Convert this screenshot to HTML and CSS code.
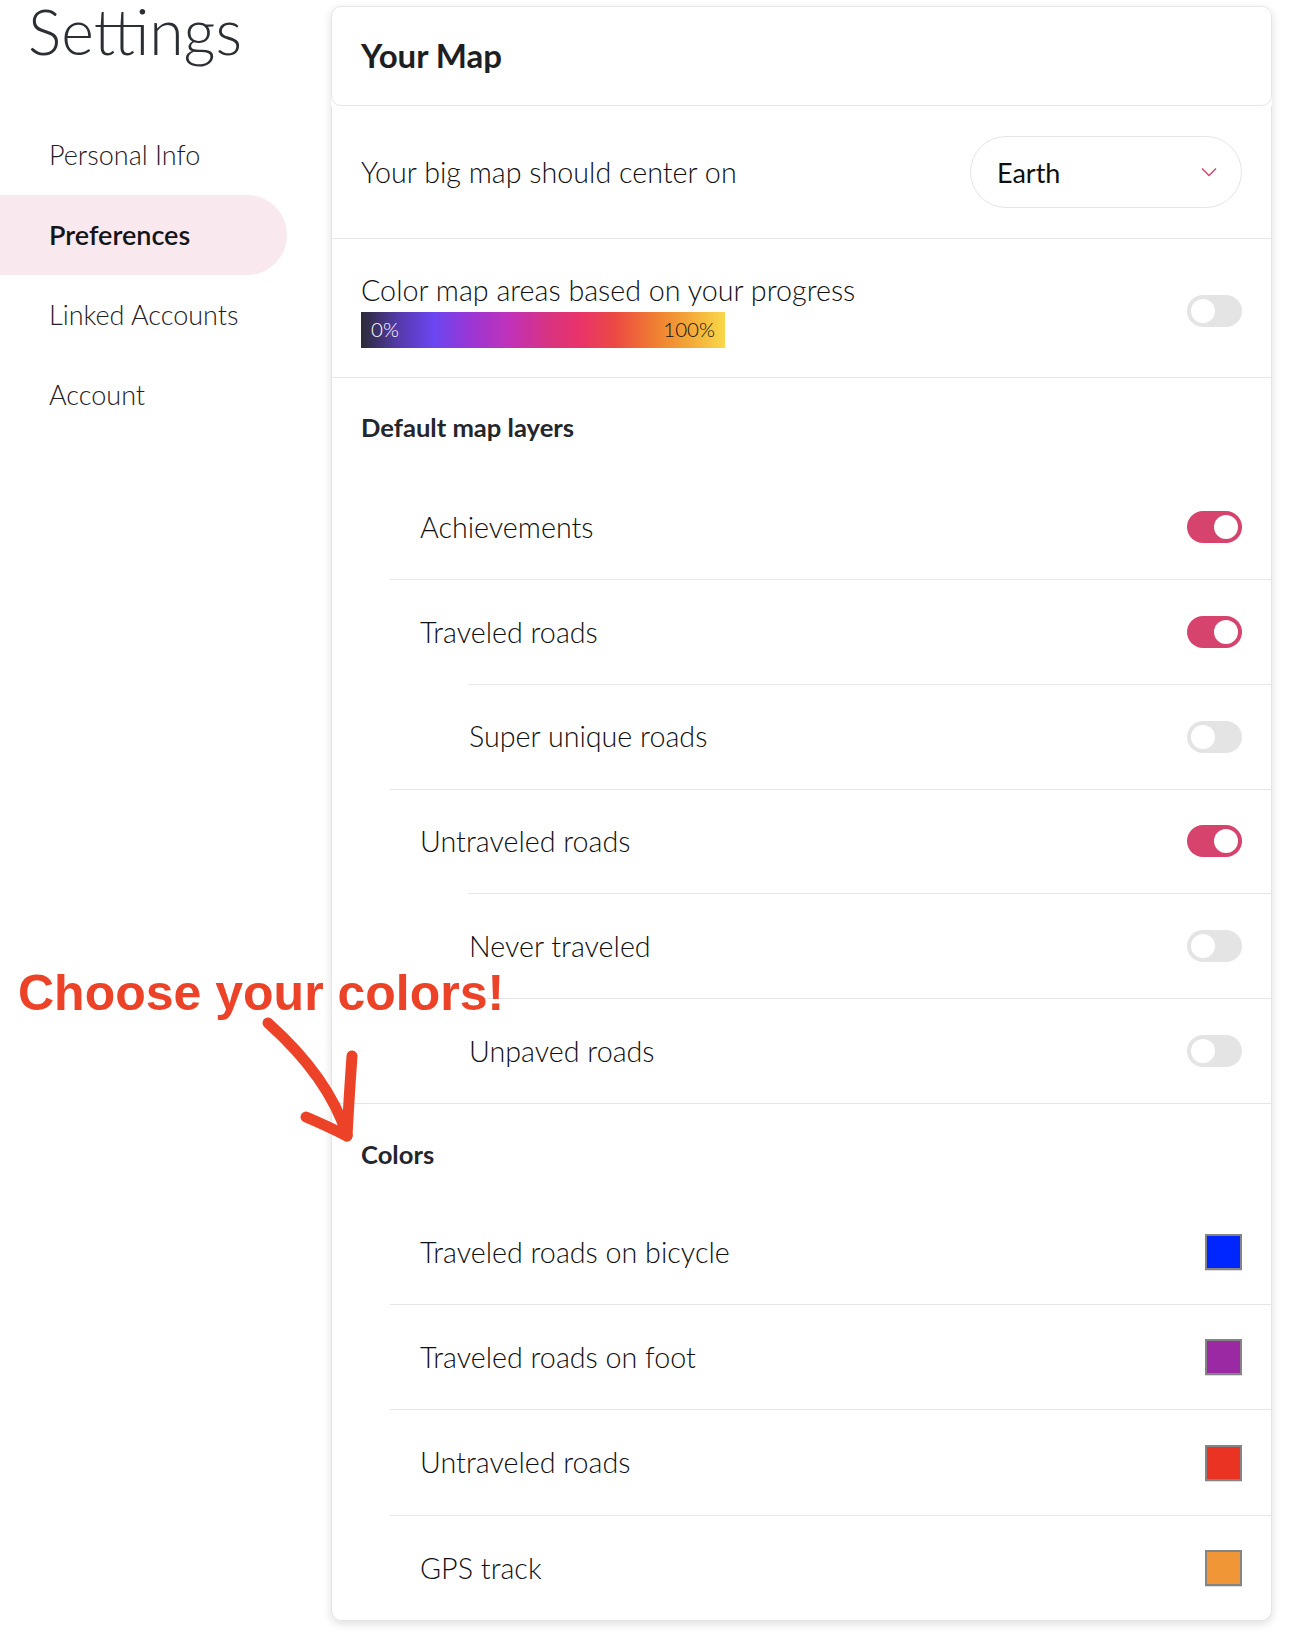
FILE: index.html
```html
<!DOCTYPE html>
<html lang="en">
<head>
<meta charset="utf-8">
<title>Settings – Preferences</title>
<link rel="stylesheet" href="styles.css">
</head>
<body>
<div class="page">
  <aside class="sidebar">
    <h1 class="title">Settings</h1>
    <nav class="nav">
      <a class="nav-item">Personal Info</a>
      <a class="nav-item active">Preferences</a>
      <a class="nav-item">Linked Accounts</a>
      <a class="nav-item">Account</a>
    </nav>
  </aside>

  <main class="card">
    <header class="card-header">
      <h2 class="card-title">Your Map</h2>
    </header>
    <div class="card-body">
      <div class="row row-center">
        <span class="label">Your big map should center on</span>
        <div class="select">
          <span class="select-value">Earth</span>
          <svg class="chevron" width="16" height="10" viewBox="0 0 16 10"><polyline points="1,1.5 8,8.5 15,1.5" fill="none" stroke="#d8456f" stroke-width="1.5"/></svg>
        </div>
      </div>

      <div class="row row-progress">
        <div class="progress-col">
          <span class="label">Color map areas based on your progress</span>
          <div class="gradient"><span class="g-min">0%</span><span class="g-max">100%</span></div>
        </div>
        <span class="toggle"></span>
      </div>

      <section class="section section-layers">
        <h3 class="section-title">Default map layers</h3>
        <ul class="list list-layers">
          <li class="item">
            <div class="item-row"><span class="label">Achievements</span><span class="toggle on"></span></div>
          </li>
          <li class="item">
            <div class="item-row"><span class="label">Traveled roads</span><span class="toggle on"></span></div>
            <ul class="sublist">
              <li class="subitem"><div class="item-row sub-row"><span class="label">Super unique roads</span><span class="toggle"></span></div></li>
            </ul>
          </li>
          <li class="item">
            <div class="item-row"><span class="label">Untraveled roads</span><span class="toggle on"></span></div>
            <ul class="sublist">
              <li class="subitem"><div class="item-row sub-row"><span class="label">Never traveled</span><span class="toggle"></span></div></li>
              <li class="subitem"><div class="item-row sub-row"><span class="label">Unpaved roads</span><span class="toggle"></span></div></li>
            </ul>
          </li>
        </ul>
      </section>

      <section class="section section-colors">
        <h3 class="section-title">Colors</h3>
        <ul class="list">
          <li class="item"><div class="item-row"><span class="label">Traveled roads on bicycle</span><span class="swatch swatch-blue"></span></div></li>
          <li class="item"><div class="item-row"><span class="label">Traveled roads on foot</span><span class="swatch swatch-purple"></span></div></li>
          <li class="item"><div class="item-row"><span class="label">Untraveled roads</span><span class="swatch swatch-red"></span></div></li>
          <li class="item"><div class="item-row"><span class="label">GPS track</span><span class="swatch swatch-orange"></span></div></li>
        </ul>
      </section>
    </div>
  </main>

  <div class="annotation">Choose your colors!</div>
  <svg class="arrow" width="130" height="140" viewBox="0 0 130 140">
    <path d="M18 13 Q78.5 67 97 125" fill="none" stroke="#ec4227" stroke-width="11" stroke-linecap="round"/>
    <path d="M56 107 Q75 115 97 126" fill="none" stroke="#ec4227" stroke-width="11" stroke-linecap="round" stroke-linejoin="round"/>
    <path d="M102 46 Q99 88 97 126" fill="none" stroke="#ec4227" stroke-width="11" stroke-linecap="round"/>
  </svg>
</div>
</body>
</html>
```

FILE: styles.css
```css
* { box-sizing: border-box; }

html, body {
  margin: 0;
  padding: 0;
  background: #ffffff;
}

body {
  font-family: "Lato", "Open Sans", sans-serif;
  color: #151618;
}

.page {
  position: relative;
  display: flex;
  align-items: flex-start;
  width: 1294px;
  min-height: 1644px;
}

/* Sidebar */
.sidebar {
  width: 331px;
  flex: none;
}

.title {
  margin: 0;
  padding-left: 28px;
  font-size: 62.5px;
  line-height: 62px;
  font-weight: 300;
  color: #2b2e33;
}

.nav {
  display: flex;
  flex-direction: column;
  margin-top: 53px;
}

.nav-item {
  display: block;
  width: 287px;
  height: 80px;
  line-height: 80px;
  padding-left: 49px;
  font-size: 27px;
  font-weight: 300;
  color: #1f2024;
  text-decoration: none;
}

.nav-item.active {
  background: #f9e9ee;
  border-radius: 0 40px 40px 0;
  font-weight: 600;
  color: #141519;
}

/* Card */
.card {
  width: 941px;
  flex: none;
  margin-top: 6px;
  border-radius: 10px;
  box-shadow: 0 3px 10px rgba(0, 0, 0, 0.13);
  background: #fff;
}

.card-header {
  height: 100px;
  display: flex;
  align-items: center;
  padding: 0 29px;
  border: 1px solid #e6e6e6;
  border-radius: 10px;
}

.card-title {
  margin: 0;
  font-size: 33px;
  line-height: 1.2;
  font-weight: 700;
  color: #1d1f23;
}

.card-body {
  border-left: 1px solid #e4e4e4;
  border-right: 1px solid #e4e4e4;
  border-bottom: 1px solid #e4e4e4;
  border-radius: 0 0 10px 10px;
}

.label {
  font-size: 28.7px;
  line-height: 1.2;
  font-weight: 300;
  color: #0f0f11;
  white-space: nowrap;
}

.row {
  display: flex;
  align-items: center;
  justify-content: space-between;
  padding: 30px 29px 30px 29px;
  border-bottom: 1px solid #e6e6e6;
}

.row-progress {
  padding-top: 34px;
  padding-bottom: 29px;
}

.progress-col {
  display: flex;
  flex-direction: column;
}

/* Select */
.select {
  width: 272px;
  height: 72px;
  display: flex;
  align-items: center;
  justify-content: space-between;
  padding: 0 24px 0 26px;
  border: 1px solid #e6e6e6;
  border-radius: 36px;
}

.select-value {
  font-size: 27px;
  font-weight: 400;
  color: #0f0f10;
}

.chevron { display: block; }

/* Gradient bar */
.gradient {
  width: 364px;
  height: 36px;
  margin-top: 5px;
  display: flex;
  align-items: center;
  justify-content: space-between;
  padding: 0 10px 3px 10px;
  font-size: 20.5px;
  font-weight: 300;
  background: linear-gradient(to right, #2c2b36 0%, #533aa8 10%, #6b47f2 20%, #9a36d4 30%, #c132b8 41%, #d9337f 52%, #e8336a 60%, #ec4a43 70%, #ef7a32 80%, #f3a236 89%, #f9d84a 100%);
}

.g-min { color: #ffffff; }
.g-max { color: #111111; }

/* Toggle */
.toggle {
  position: relative;
  flex: none;
  width: 55px;
  height: 32px;
  border-radius: 16px;
  background: #e4e4e4;
}

.toggle::after {
  content: "";
  position: absolute;
  top: 4px;
  left: 4px;
  width: 24px;
  height: 24px;
  border-radius: 50%;
  background: #ffffff;
}

.toggle.on { background: #d6436d; }
.toggle.on::after { left: 27px; }

/* Sections */
.section {
  padding: 34px 0 0 29px;
}

.section-layers {
  border-bottom: 1px solid #e6e6e6;
}

.section-colors {
  padding-top: 35px;
}

.section-title {
  margin: 0 0 29px 0;
  font-size: 25.6px;
  line-height: 1.2;
  font-weight: 700;
  color: #23262b;
}

.section-colors .section-title {
  margin-bottom: 30px;
}

.list {
  list-style: none;
  margin: 0 0 0 29px;
  padding: 0;
}

.list-layers { padding-top: 3px; }

.item {
  border-bottom: 1px solid #e6e6e6;
}

.item:last-child { border-bottom: none; }

.item-row {
  display: flex;
  align-items: center;
  justify-content: space-between;
  height: 103.8px;
  padding: 0 29px 0 30px;
}

.section-colors .item-row {
  height: 104.4px;
}

.sublist {
  list-style: none;
  margin: 0 0 0 78px;
  padding: 0;
}

.subitem {
  border-top: 1px solid #e6e6e6;
}

.item-row.sub-row {
  padding-left: 1px;
}

/* Swatches */
.swatch {
  flex: none;
  width: 37px;
  height: 36px;
  border: 2px solid #848484;
  box-shadow: 0 1px 0 #dcdcdc;
}

.swatch-blue { background: #0026ff; }
.swatch-purple { background: #9b29a3; }
.swatch-red { background: #ea3323; }
.swatch-orange { background: #f09637; }

/* Annotation overlay */
.annotation {
  position: absolute;
  left: 18px;
  top: 968px;
  font-family: "Liberation Sans", Arial, sans-serif;
  font-weight: 700;
  font-size: 50px;
  line-height: 50px;
  color: #ec4227;
  white-space: nowrap;
  z-index: 2;
}

.arrow {
  position: absolute;
  left: 250px;
  top: 1010px;
  z-index: 2;
}
```
